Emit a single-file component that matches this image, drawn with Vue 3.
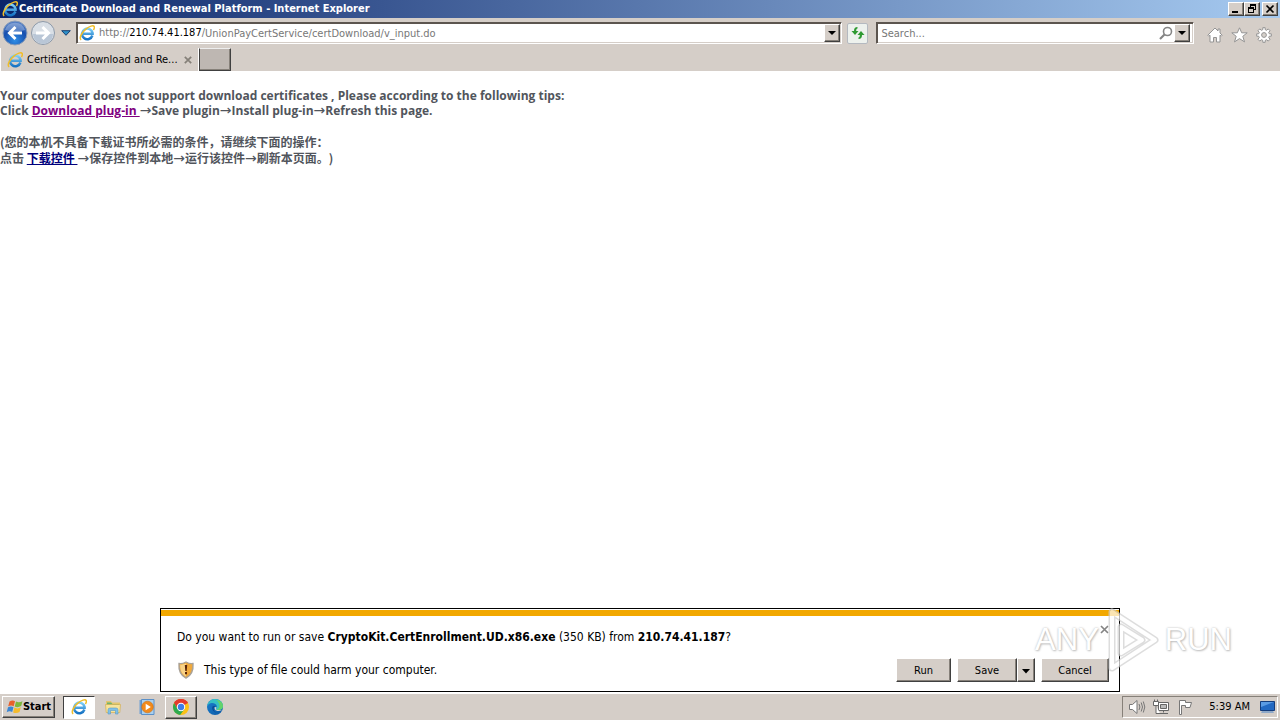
<script setup>
import { ref } from 'vue';

const address = ref('UnionPayCertService/certDownload/v_input.do');
const search = ref('');
const tabOpen = ref(true);
const noticeVisible = ref(true);

const closeNotice = () => {
  noticeVisible.value = false;
};
</script>

<template>
  <div class="desktop">
    <svg class="defs" aria-hidden="true">
      <defs>
        <linearGradient id="eBlue" x1="0" y1="0" x2="0" y2="1">
          <stop offset="0" stop-color="#7fd0f8" />
          <stop offset="1" stop-color="#1673c4" />
        </linearGradient>
        <radialGradient id="backBlue" cx=".5" cy=".8" r=".8">
          <stop offset="0" stop-color="#2f8ee6" />
          <stop offset=".6" stop-color="#174fae" />
          <stop offset="1" stop-color="#5f87c9" />
        </radialGradient>
        <linearGradient id="edgeBlue" x1="0" y1="0" x2="1" y2="1">
          <stop offset="0" stop-color="#1c7fd0" />
          <stop offset="1" stop-color="#0c59a4" />
        </linearGradient>
        <symbol id="ie" viewBox="0 0 16 16">
          <path d="M13.4 10.5A5.3 5.3 0 1 1 13.6 8v.8H4" fill="none" stroke="url(#eBlue)" stroke-width="2.5" />
          <path d="M2.2 14.8C-.2 13.2 2.6 7.6 6.8 4.2 10.4 1.2 14.4-.1 15.2 1.6c.4.9 0 2.1-.8 3.4" fill="none" stroke="#f0bd28" stroke-width="1.5" />
        </symbol>
      </defs>
    </svg>

    <header class="titlebar">
      <svg class="icon16"><use href="#ie" /></svg>
      <h1>Certificate Download and Renewal Platform - Internet Explorer</h1>
      <div class="caption-buttons">
        <button type="button" aria-label="Minimize">
          <svg width="12" height="10" viewBox="0 0 12 10"><path d="M2 7h6v2H2z" /></svg>
        </button>
        <button type="button" aria-label="Restore">
          <svg width="12" height="10" viewBox="0 0 12 10"><path d="M4 0h6v6H8V5h1V2H5v1H4zM2 3h6v6H2zm1 2v3h4V5z" fill-rule="evenodd" /></svg>
        </button>
        <button type="button" class="close" aria-label="Close">
          <svg width="12" height="10" viewBox="0 0 12 10"><path d="M2.5 1.5l7 7M9.5 1.5l-7 7" stroke="#000" stroke-width="1.7" /></svg>
        </button>
      </div>
    </header>

    <nav class="navbar">
      <button type="button" class="plain" aria-label="Back">
        <svg width="26" height="26" viewBox="0 0 26 26">
          <circle cx="13" cy="13" r="12" fill="url(#backBlue)" stroke="#8a9db8" />
          <path d="M3 10a10.5 10.5 0 0 1 20 0Q13 13 3 10z" fill="#fff" opacity=".3" />
          <path d="M20 13H8m5.5-6L7.5 13l6 6" fill="none" stroke="#fff" stroke-width="3" />
        </svg>
      </button>
      <button type="button" class="plain forward" aria-label="Forward">
        <svg width="26" height="26" viewBox="0 0 26 26">
          <circle cx="13" cy="13" r="11.5" fill="#d9dfe6" stroke="#8d99a8" />
          <path d="M3 14h20a10 10 0 0 1-20 0z" fill="#b9c6d6" />
          <path d="M6 13h12m-5.5-6l6 6-6 6" fill="none" stroke="#fff" stroke-width="3" />
        </svg>
      </button>
      <button type="button" class="plain history" aria-label="Recent pages">
        <svg width="10" height="6" viewBox="0 0 10 6"><path d="M.7.7h8.6L5 5.3z" fill="#2d90c8" stroke="#173e70" /></svg>
      </button>

      <div class="field address">
        <svg class="icon16"><use href="#ie" /></svg>
        <label for="address"><span>http://</span>210.74.41.187<span>/</span></label>
        <input id="address" v-model="address" type="text">
        <button type="button" class="drop" aria-label="Show address list">
          <svg width="8" height="4" viewBox="0 0 8 4"><path d="M0 0h8L4 4z" /></svg>
        </button>
      </div>
      <button type="button" class="refresh" aria-label="Refresh">
        <svg width="14" height="14" viewBox="0 0 14 14" fill="#2f9a32">
          <path d="M6.5 1C4 1 3 2.5 3 5H.5L4 9l3.5-4H5.2c0-1.6.3-2.2 1.3-2.5z" />
          <path d="M7.5 13c2.5 0 3.5-1.5 3.5-4h2.5L10 5 6.5 9h2.3c0 1.6-.3 2.2-1.3 2.5z" />
        </svg>
      </button>
      <div class="field search">
        <input v-model="search" type="text" placeholder="Search..." aria-label="Search">
        <svg width="14" height="14" viewBox="0 0 14 14" fill="none" stroke="#858585">
          <circle cx="8.5" cy="5.5" r="4" stroke-width="1.6" />
          <path d="M5.5 8.5L1 13" stroke-width="2.2" />
        </svg>
        <button type="button" class="drop" aria-label="Search options">
          <svg width="8" height="4" viewBox="0 0 8 4"><path d="M0 0h8L4 4z" /></svg>
        </button>
      </div>

      <div class="tools">
        <button type="button" class="plain" aria-label="Home">
          <svg width="16" height="16" viewBox="0 0 16 16"><path d="M8 1L.8 8.2l1 1L3 8.2V15h3.5v-4.500h3V15H13V8.200l1.200 1 1-1L13 6V2h-2v2z" fill="#fff" stroke="#949494" /></svg>
        </button>
        <button type="button" class="plain" aria-label="Favorites">
          <svg width="17" height="16" viewBox="0 0 17 16"><path d="M8.5.8l2.200 5h5.500l-4.400 3.500 1.700 5.600-5-3.300-5 3.300 1.700-5.600L.8 5.800h5.500z" fill="#fff" stroke="#949494" /></svg>
        </button>
        <button type="button" class="plain" aria-label="Tools">
          <svg width="16" height="16" viewBox="0 0 16 16">
            <path d="M6.800.7h2.400v2l1.500.6L12.200 1.900l1.900 1.900-1.400 1.500.6 1.500h2v2.400h-2l-.6 1.500 1.400 1.500-1.900 1.900-1.500-1.400-1.500.6v2H6.800v-2l-1.500-.6-1.500 1.400-1.900-1.900 1.400-1.500-.6-1.500h-2V6.800h2l.6-1.500-1.400-1.500 1.900-1.900 1.500 1.400 1.500-.6z" fill="#fff" stroke="#949494" />
            <circle cx="8" cy="8" r="2.4" fill="#d5d0ca" stroke="#949494" />
          </svg>
        </button>
      </div>
    </nav>

    <div class="tabs">
      <div v-if="tabOpen" class="tab">
        <svg class="icon16"><use href="#ie" /></svg>
        <span>Certificate Download and Re...</span>
        <button type="button" class="plain" aria-label="Close tab" @click="tabOpen = false">
          <svg width="8" height="8" viewBox="0 0 8 8"><path d="M.8.8l6.4 6.4M7.2.8L.8 7.2" stroke="#858079" stroke-width="1.7" /></svg>
        </button>
      </div>
      <button type="button" class="new-tab" aria-label="New tab"></button>
    </div>

    <main class="page">
      <p>
        Your computer does not support download certificates , Please according to the following tips:<br>
        Click <a class="visited" href="#plugin">Download plug-in&nbsp;</a><i>→</i>Save plugin<i>→</i>Install plug-in<i>→</i>Refresh this page.
      </p>
      <p class="chinese" lang="zh-CN">
        (您的本机不具备下载证书所必需的条件，请继续下面的操作：<br>
        点击 <a href="#control">下载控件&nbsp;</a><i>→</i>保存控件到本地<i>→</i>运行该控件<i>→</i>刷新本页面。)
      </p>

      <section v-if="noticeVisible" class="notice" aria-label="File download">
        <div class="question">
          <p>Do you want to run or save <b>CryptoKit.CertEnrollment.UD.x86.exe</b> (350 KB) from <b>210.74.41.187</b>?</p>
          <button type="button" class="plain" aria-label="Close" @click="closeNotice">
            <svg width="9" height="9" viewBox="0 0 9 9"><path d="M1 1l7 7M8 1L1 8" stroke="#858585" stroke-width="1.7" /></svg>
          </button>
        </div>
        <div class="warning">
          <svg width="18" height="18" viewBox="0 0 18 18">
            <path d="M9 1q3.5 2 7 1.5C16.5 9 15 14 9 17 3 14 1.500 9 2 2.500 5.500 3 9 1 9 1z" fill="#f0a93c" stroke="#a8a29a" stroke-width="1.4" />
            <path d="M9 2.500v13C4.500 13 3 9 3.200 3.600Q6 3.900 9 2.500z" fill="#f9d387" />
            <path d="M7.800 4h2.400l-.5 6H8.300zM8 11h2v2.200H8z" fill="#5a2508" />
          </svg>
          <p>This type of file could harm your computer.</p>
          <div class="actions">
            <button type="button" class="action run">Run</button>
            <div class="split">
              <button type="button" class="action save">Save</button>
              <button type="button" class="action more" aria-label="Save options">
                <svg width="8" height="5" viewBox="0 0 8 5"><path d="M0 0h8L4 4.5z" /></svg>
              </button>
            </div>
            <button type="button" class="action cancel" @click="closeNotice">Cancel</button>
          </div>
        </div>
      </section>
    </main>

    <footer class="taskbar">
      <button type="button" class="start">
        <svg width="17" height="16" viewBox="0 0 17 16">
          <path d="M3.500 2.500q3-2 5.500-.3L7.700 7.200q-2.500-1.600-5.500 0z" fill="#e8602c" />
          <path d="M10 2.600q3 1.700 6.500-.4L15.200 7q-3.500 2-6.500.5z" fill="#7db83c" />
          <path d="M2 8.300q3-1.700 5.500 0L6.200 13q-2.700-1.500-5.500.2z" fill="#3b86d4" />
          <path d="M8.400 8.600q3 1.700 6.500-.3L13.500 13q-3.200 2-6.400.4z" fill="#f5bb2c" />
        </svg>
        Start
      </button>
      <button type="button" class="task active" aria-label="Internet Explorer">
        <svg class="icon16"><use href="#ie" /></svg>
      </button>
      <button type="button" class="task" aria-label="Explorer">
        <svg width="18" height="18" viewBox="0 0 18 18">
          <path d="M2 3h5l1 1.500h8V14H2z" fill="#e5c66c" />
          <path d="M3 4.500h4L8.500 6H15v3H3z" fill="#6fb36c" />
          <path d="M1.500 6.500h15l-.7 8H2.200z" fill="#f7e49b" stroke="#d3ae51" stroke-width=".7" />
          <path d="M4 16v-4q0-2 2-2h6q2 0 2 2v4h-2.500v-3.500h-5V16z" fill="#7fc0e8" stroke="#5d9ac4" stroke-width=".6" />
        </svg>
      </button>
      <button type="button" class="task" aria-label="Media Player">
        <svg width="18" height="18" viewBox="0 0 18 18">
          <path d="M1.500 2h12v14h-12z" fill="#6ea0d4" />
          <path d="M3.500 1.500h12.500v15H3.500z" fill="#a9d0ef" stroke="#5b90c8" />
          <circle cx="9.5" cy="9" r="5.8" fill="#f18a1c" stroke="#cf6b0c" stroke-width=".6" />
          <path d="M7.700 5.700v6.600L12.800 9z" fill="#fff" />
        </svg>
      </button>
      <button type="button" class="task raised" aria-label="Chrome">
        <svg width="18" height="18" viewBox="0 0 18 18">
          <circle cx="9" cy="9" r="8" fill="#fbc116" />
          <path d="M9 9L2.100 5A8 8 0 0 1 15.900 5z" fill="#e33b2e" />
          <path d="M9 5h6.900A8 8 0 0 0 2.100 5l3.400 6z" fill="#e33b2e" />
          <path d="M2.100 5a8 8 0 0 0 6 12l4.400-6H5.500z" fill="#2da94f" />
          <circle cx="9" cy="9" r="4.2" fill="#fff" />
          <circle cx="9" cy="9" r="3.2" fill="#3d7de8" />
        </svg>
      </button>
      <button type="button" class="task" aria-label="Edge">
        <svg width="18" height="18" viewBox="0 0 18 18">
          <circle cx="9" cy="9" r="8" fill="url(#edgeBlue)" />
          <path d="M1 8.500C2 3.500 5.300 1 9 1c5 0 8 3.400 8 7 0 2.500-1.900 4-4.500 4-1.700 0-2.500-.6-2.500-1.300 0-.6.800-.9.800-2.200C10.800 6.500 8.500 5 6 5 3.700 5 2 6.300 1 8.500z" fill="#35bfc4" />
          <path d="M10 2c4.500.1 7 3 7 6 0 2.500-1.900 4-4.500 4-.9 0-1.600-.2-2-.5C15 10.500 14 4.500 10 2z" fill="#63d36b" />
          <path d="M6.500 8.500c-1.200 4 2.500 7.200 7 5.900-3 1-5.900-.9-5.900-3.500 0-1.300.7-2.100 1.700-2.700-.9-.5-2.200-.4-2.800.3z" fill="#0a4791" />
          <path d="M8.800 9c-.5 1.500 0 4 3.700 4 1.500 0 2.800-.4 3.800-1.200-.8.300-2.200.5-3.800.2-1.700 0-2.500-.6-2.500-1.300 0-.6.500-.9.500-1.500z" fill="#d5d0ca" />
        </svg>
      </button>

      <div class="tray">
        <svg width="18" height="18" viewBox="0 0 18 18" fill="none" stroke="#777">
          <path d="M1.500 6.500h3L9 2.500v13l-4.500-4h-3z" fill="#fff" />
          <path d="M11 6q1.800 3 0 6M13.200 4.500q2.600 4.500 0 9M15.300 3.500q3 5.500 0 11" />
        </svg>
        <svg width="18" height="18" viewBox="0 0 18 18" fill="none" stroke="#666">
          <path d="M6.500 4.500h10v8h-10z" fill="#fff" />
          <path d="M8.500 6.500h6v4h-6z" fill="#bbb" />
          <path d="M11.500 12.500v2M8 15.500h8" />
          <path d="M1.500 3.500h5v4h-5zM2.500 1.500v2M5.500 1.500v2M4 7.500v8h4" fill="#fff" />
        </svg>
        <svg width="18" height="18" viewBox="0 0 18 18" stroke="#777">
          <path d="M3.500 2.500h6v2h6l-1.500 5H9.500v-2h-4v9h-2z" fill="#fff" />
        </svg>
        <time>5:39 AM</time>
        <svg width="18" height="18" viewBox="0 0 18 18">
          <path d="M1.500 3.500h14v9h-14z" fill="#2369c2" stroke="#153d7c" />
          <path d="M2 4h13L2 9z" fill="#5b9be3" />
          <path d="M3 13h11l1 2H2z" fill="#8ea8c8" />
        </svg>
      </div>
    </footer>

    <div class="watermark" aria-hidden="true">
      <span>ANY</span>
      <svg width="54" height="66" viewBox="0 0 54 66" fill="none" stroke-linejoin="round">
        <path d="M7 5v56l43-28zM16 20v26l21-13z" stroke="#d0d0d0" stroke-width="7" />
        <path d="M7 5v56l43-28zM16 20v26l21-13z" stroke="#fff" stroke-width="4" />
      </svg>
      <span>RUN</span>
    </div>
  </div>
</template>

<style>
body {
  margin: 0;
}
</style>

<style scoped>
.desktop {
  position: relative;
  display: flex;
  flex-direction: column;
  height: 100vh;
  overflow: hidden;
  background: #d5cec8;
  color: #000;
  font: 11px/14px Tahoma, 'DejaVu Sans Condensed', 'DejaVu Sans', sans-serif;
}
.defs {
  position: absolute;
  width: 0;
  height: 0;
}
svg {
  display: block;
  flex: none;
}
button,
input {
  box-sizing: border-box;
  margin: 0;
  padding: 0;
  color: inherit;
  font: inherit;
}
button {
  display: flex;
  align-items: center;
  justify-content: center;
  background: #d5cec8;
  border: 1px solid;
  border-color: #fff #404040 #404040 #fff;
  box-shadow: inset -1px -1px #868079;
}
p {
  margin: 0;
}
.plain {
  background: none;
  border: 0;
  box-shadow: none;
}
.icon16 {
  width: 16px;
  height: 16px;
}

/* title bar */
.titlebar {
  display: flex;
  align-items: center;
  gap: 1px;
  height: 18px;
  padding: 0 2px;
  background: linear-gradient(90deg, #0b2569, #a6caf0);
}
.titlebar h1 {
  flex: 1;
  margin: 0;
  color: #fff;
  font-size: 11px;
  font-weight: bold;
  white-space: nowrap;
}
.caption-buttons {
  display: flex;
}
.caption-buttons button {
  width: 16px;
  height: 14px;
}
.caption-buttons .close {
  margin-left: 2px;
}

/* address and search */
.navbar {
  display: flex;
  align-items: center;
  height: 30px;
  padding: 0 8px 0 2px;
}
.forward {
  margin-left: 2px;
}
.history {
  width: 20px;
  height: 20px;
}
.field {
  box-sizing: border-box;
  display: flex;
  align-items: center;
  height: 22px;
  background: #fff;
  border: 1px solid;
  border-color: #5c554f #fff #fff #5c554f;
  box-shadow: inset 1px 1px #5c554f, inset -1px -1px #d5cec8;
}
.field input {
  flex: 1;
  min-width: 0;
  height: 18px;
  background: none;
  border: 0;
  outline: 0;
  color: #777;
}
.field input::placeholder {
  color: #777;
  opacity: 1;
}
.address {
  flex: 760;
  padding: 0 1px 0 2px;
}
.address label {
  margin-left: 4px;
}
.address label span {
  color: #777;
}
.drop {
  width: 16px;
  height: 18px;
}
.refresh {
  width: 21px;
  height: 21px;
  margin: 0 8px 0 5px;
  background: #edf1ed;
  border-color: #b4b9c0;
  border-radius: 2px;
  box-shadow: none;
}
.search {
  flex: 308;
  gap: 1px;
  padding: 0 3px 0 4px;
}
.tools {
  display: flex;
  gap: 8px;
  margin: 4px 0 0 13px;
}

/* tabs */
.tabs {
  display: flex;
  height: 23px;
}
.tab {
  box-sizing: border-box;
  display: flex;
  align-items: center;
  width: 199px;
  padding: 0 6px;
  border-right: 1px solid #fff;
  border-left: 1px solid #fff;
}
.tab span {
  flex: 1;
  margin-left: 4px;
  white-space: nowrap;
}
.new-tab {
  width: 32px;
  height: 23px;
  background: #beb7b2;
  border-color: #eee #404040 #404040 #404040;
}

/* web page */
.page {
  position: relative;
  flex: 1;
  padding-top: 17px;
  background: #fff;
  color: #51555c;
  font: bold 12px/15px 'Open Sans', 'Noto Sans CJK SC', sans-serif;
}
.page i {
  font-family: 'DejaVu Sans', sans-serif;
  font-size: 14px;
  font-style: normal;
  font-weight: normal;
  line-height: 12px;
}
.page a {
  color: #00007c;
}
.page a.visited {
  color: #800080;
}
.chinese {
  margin-top: 16px;
  font-family: 'Noto Sans CJK SC', sans-serif;
  line-height: 16px;
  text-spacing-trim: space-all;
}

/* download notice */
.notice {
  position: absolute;
  right: 12.5%;
  bottom: 1px;
  left: 12.5%;
  box-sizing: border-box;
  padding: 12px 10px 9px 16px;
  background: #fff;
  border: 1px solid #000;
  box-shadow: inset 0 1px #fff, inset 0 7px #f2a800;
  color: #000;
  font: 12px/16px Tahoma, 'DejaVu Sans Condensed', 'DejaVu Sans', sans-serif;
}
.question {
  display: flex;
  justify-content: space-between;
  padding-top: 4px;
}
.question p {
  margin-top: 4px;
}
.question .plain {
  width: 9px;
  height: 9px;
}
.warning {
  display: flex;
  align-items: center;
  gap: 9px;
  margin-top: 13px;
}
.actions {
  display: flex;
  gap: 6px;
  margin-left: auto;
  font-size: 11px;
}
.split {
  display: flex;
}
.action {
  height: 24px;
  padding-top: 2px;
}
.run {
  width: 55px;
}
.save {
  width: 60px;
}
.more {
  width: 18px;
}
.cancel {
  width: 68px;
}

/* taskbar */
.taskbar {
  box-sizing: border-box;
  display: flex;
  align-items: center;
  height: 27px;
  padding: 0 2px;
  border-top: 1px solid #fff;
}
.start {
  width: 53px;
  height: 22px;
  margin-right: 8px;
  font-weight: bold;
}
.task {
  width: 32px;
  height: 23px;
  margin-right: 2px;
  background: none;
  border-color: transparent;
  box-shadow: none;
}
.task.active {
  background: #fff;
  border-color: #404040 #fff #fff #404040;
}
.task.raised {
  border-color: #fff #404040 #404040 #fff;
  box-shadow: inset -1px -1px #868079;
}
.tray {
  box-sizing: border-box;
  display: flex;
  align-items: center;
  gap: 6px;
  height: 22px;
  margin-left: auto;
  padding: 0 0 0 5px;
  border: 1px solid;
  border-color: #868079 #fff #fff #868079;
}
.tray time {
  margin: 0 3px 0 9px;
}

.watermark {
  position: absolute;
  right: 48px;
  bottom: 47px;
  display: flex;
  align-items: center;
  gap: 6px;
  opacity: 0.7;
  color: #fff;
  font: 31px/36px 'Liberation Sans', sans-serif;
  text-shadow: 0 0 2px #999, 1px 1px 2px #aaa;
  pointer-events: none;
}
</style>
